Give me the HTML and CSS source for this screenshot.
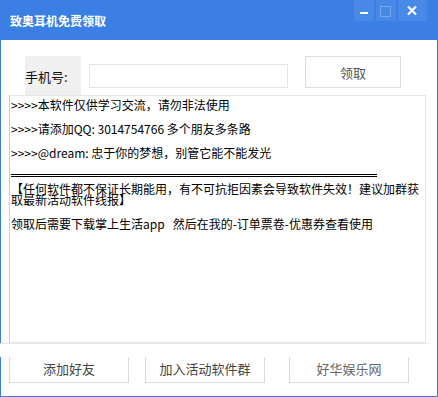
FILE: index.html
```html
<!DOCTYPE html>
<html lang="zh-CN">
<head>
    <meta charset="UTF-8">
    <meta name="viewport" content="width=device-width, initial-scale=1.0">
    <title>致奥耳机免费领取</title>
    <link rel="stylesheet" href="styles.css">
</head>
<body>
    <div class="window">
        <div class="titlebar">
            <span class="title">致奥耳机免费领取</span>
            <div class="sys-buttons">
                <button class="sys-btn min">
                    <svg width="20" height="21" viewBox="0 0 20 21"><rect x="6" y="12" width="8" height="2" fill="#fff"/></svg>
                </button>
                <button class="sys-btn max">
                    <svg width="20" height="21" viewBox="0 0 20 21"><rect x="4.5" y="6.5" width="10" height="10" fill="none" stroke="rgba(255,255,255,0.25)"/></svg>
                </button>
                <button class="sys-btn close">
                    <svg width="29" height="21" viewBox="0 0 29 21"><path d="M10 6.5 L18 14.5 M18 6.5 L10 14.5" stroke="#fff" stroke-width="2.2"/></svg>
                </button>
            </div>
        </div>
        <div class="content">
            <div class="form-row">
                <label class="phone-label">手机号:</label>
                <input class="phone-input" type="text">
                <button class="get-btn">领取</button>
            </div>
            <div class="log">
                <p class="log-line">&gt;&gt;&gt;&gt;本软件仅供学习交流，请勿非法使用</p>
                <p class="log-line">&gt;&gt;&gt;&gt;请添加QQ: 3014754766 多个朋友多条路</p>
                <p class="log-line">&gt;&gt;&gt;&gt;@dream: 忠于你的梦想，别管它能不能发光</p>
                <div class="rule"></div>
                <p class="notice">【任何软件都不保证长期能用，有不可抗拒因素会导致软件失效！建议加群获取最新活动软件线报】</p>
                <p class="log-line tip">领取后需要下载掌上生活app&nbsp;&nbsp;&nbsp;然后在我的-订单票卷-优惠券查看使用</p>
            </div>
            <div class="strip"></div>
            <div class="actions">
                <button class="action-btn first">添加好友</button>
                <button class="action-btn second">加入活动软件群</button>
                <button class="action-btn third">好华娱乐网</button>
            </div>
        </div>
    </div>
</body>
</html>
```

FILE: styles.css
```css
body, html {
    margin: 0;
    padding: 0;
    background: #fff;
    font-family: "Noto Sans CJK SC", "DejaVu Sans", sans-serif;
}
.window {
    width: 438px;
    height: 397px;
    display: flex;
    flex-direction: column;
}
.titlebar {
    height: 40px;
    background: #3b7fe5;
    display: flex;
    justify-content: space-between;
    align-items: flex-start;
    flex-shrink: 0;
}
.title {
    margin: 11px 0 0 10px;
    font-size: 12px;
    line-height: 20px;
    font-weight: bold;
    color: #fff;
}
.sys-buttons {
    display: flex;
    gap: 2px;
    margin-right: 11px;
}
.sys-btn {
    height: 21px;
    width: 20px;
    padding: 0;
    border: none;
    background: rgba(255,255,255,0.07);
    display: block;
}
.sys-btn svg {
    display: block;
}
.sys-btn.close {
    width: 29px;
}
.content {
    flex: 1;
    border: 1px solid #3b7fe5;
    border-top: none;
    display: flex;
    flex-direction: column;
}
.form-row {
    display: flex;
    align-items: flex-start;
    padding-top: 16px;
}
.phone-label {
    margin-left: 24px;
    width: 56px;
    height: 39px;
    background: #f0f0f0;
    font-size: 13px;
    line-height: 42px;
    color: #111;
}
.phone-input {
    margin: 8px 0 0 8px;
    width: 199px;
    height: 24px;
    box-sizing: border-box;
    border: 1px solid #e4e4e4;
    padding: 0;
    background: #fff;
}
.get-btn {
    margin-left: 17px;
    width: 96px;
    height: 32px;
    box-sizing: border-box;
    border: 1px solid #dcdcdc;
    background: #fff;
    font-family: inherit;
    font-size: 13px;
    color: #555;
    padding: 0;
}
.log {
    margin-left: 8px;
    width: 417px;
    height: 248px;
    box-sizing: border-box;
    border: 1px solid #e6e6e6;
    border-left-color: #cfcfcf;
    padding: 0 0 0 1px;
    font-size: 12px;
    color: #000;
}
.log-line {
    margin: 0 0 6px;
    line-height: 18px;
    white-space: nowrap;
}
.rule {
    margin-top: 12px;
    width: 366px;
    border-top: 3px double #000;
}
.notice {
    margin: 6px 0 0;
    line-height: 11px;
    padding-right: 4px;
}
.tip {
    margin-top: 10px;
}
.strip {
    margin-left: -1px;
    width: 429px;
    height: 13px;
    border-top: 1px solid #e8e8e8;
    background: #fff;
}
.actions {
    display: flex;
    padding-left: 8px;
}
.action-btn {
    width: 120px;
    height: 26px;
    box-sizing: border-box;
    border: 1px solid #dadada;
    border-top: none;
    background: #fff;
    font-family: inherit;
    font-size: 13px;
    color: #444;
    padding: 0 0 2px;
}
.action-btn.second {
    margin-left: 16px;
}
.action-btn.third {
    margin-left: 24px;
    color: #666;
}
```
